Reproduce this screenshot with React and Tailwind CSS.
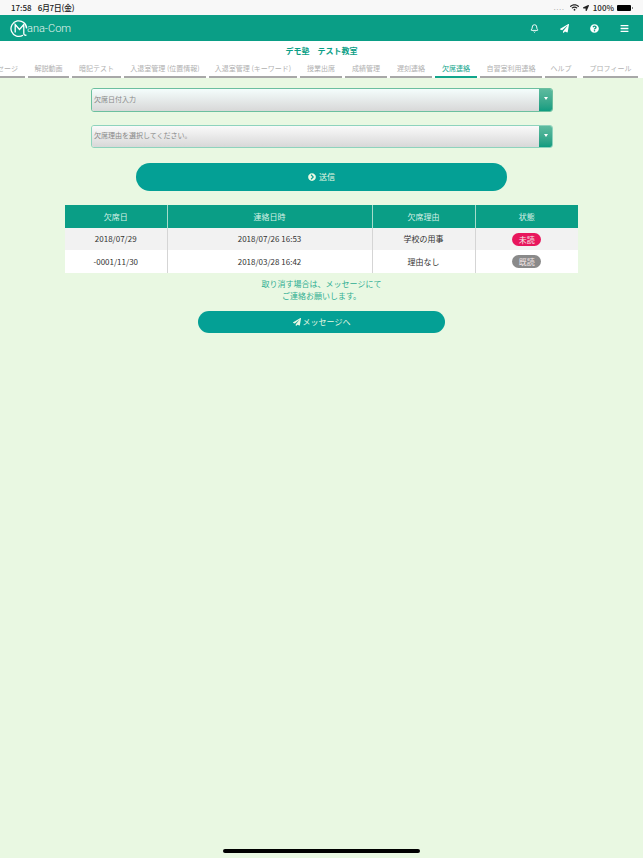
import React from "react";
import { Bell } from "lucide-react";
import { FaPaperPlane, FaQuestionCircle, FaBars, FaChevronCircleRight, FaWifi, FaLocationArrow } from "react-icons/fa";

const tabs = [
  { label: "メッセージ", w: "w-[49px]" },
  { label: "解説動画", w: "w-[41px]" },
  { label: "暗記テスト", w: "w-[49px]" },
  { label: "入退室管理 (位置情報)", w: "w-[82px]" },
  { label: "入退室管理 (キーワード)", w: "w-[88px]" },
  { label: "授業出席", w: "w-[42px]" },
  { label: "成績管理", w: "w-[42px]" },
  { label: "遅刻連絡", w: "w-[42px]" },
  { label: "欠席連絡", w: "w-[42px]", active: true },
  { label: "自習室利用連絡", w: "w-[62px]" },
  { label: "ヘルプ", w: "w-[32px]" },
  { label: "プロフィール", w: "w-[55px] ml-[3px]" },
];

const rows = [
  { date: "2018/07/29", sent: "2018/07/26 16:53", reason: "学校の用事", status: "未読", badge: "bg-[#e8175d]", rowBg: "h-[22px] bg-[#f2f2f2]" },
  { date: "-0001/11/30", sent: "2018/03/28 16:42", reason: "理由なし", status: "既読", badge: "bg-[#8a8a8a]", rowBg: "h-[23px] bg-white" },
];

function Logo() {
  return (
    <svg width="19" height="19" viewBox="0 0 19 19" fill="none" stroke="white" strokeWidth="1.3">
      <path d="M13 16.2A7.8 7.8 0 1 1 16.6 9.5" />
      <path d="M5.2 13.5V5.5L9.5 10.5L13.8 5.5V14.5C13.8 16 15 16.6 16.5 16" />
    </svg>
  );
}

function SelectBox({ label, borderColor, from, height }) {
  return (
    <div className={`flex w-[462px] overflow-hidden rounded-[3px] border ${height} ${borderColor}`}>
      <div className={`flex flex-1 items-center bg-gradient-to-b ${from} to-[#d8d8d8] pb-[2px] pl-[2px] text-[7px] text-[#888]`}>
        {label}
      </div>
      <div className="flex w-[13px] items-start justify-center bg-gradient-to-b from-[#5dbb9f] to-[#0c9c80] pt-[8px]">
        <div className="h-0 w-0 border-x-[2px] border-t-[3px] border-x-transparent border-t-white" />
      </div>
    </div>
  );
}

export default function App() {
  return (
    <div
      className="flex h-[858px] w-[643px] flex-col overflow-hidden bg-[#e9f8e2]"
      style={{ fontFamily: '"Noto Sans CJK JP", "Liberation Sans", sans-serif' }}
    >
      {/* Status bar */}
      <div className="flex h-[15px] items-center justify-between bg-[#f8f8f8] pl-[11px] pr-[10px] text-[8px] font-medium text-[#222]">
        <div className="flex gap-[6px]">
          <span>17:58</span>
          <span className="tracking-[-0.3px]">6月7日(金)</span>
        </div>
        <div className="flex items-center gap-[3px]">
          <span className="mr-[2px] text-[6px] tracking-[1px] text-[#aaa]">....</span>
          <FaWifi size={9} />
          <FaLocationArrow size={6} className="mx-[1px]" />
          <span>100%</span>
          <div className="h-[6px] w-[14px] rounded-[1px] bg-black" />
          <div className="ml-[-2px] h-[2px] w-px bg-[#888]" />
        </div>
      </div>

      {/* Header */}
      <header className="flex h-[26px] items-center justify-between bg-[#0a9e86] pl-[10px] pr-[14px]">
        <div className="flex items-center text-[#e4f5ef]">
          <Logo />
          <span className="ml-[-2px] text-[11px] font-light leading-none" style={{ fontFamily: "Roboto, sans-serif" }}>
            ana-Com
          </span>
        </div>
        <div className="flex items-center gap-[21px] text-white">
          <Bell size={9} strokeWidth={2.5} />
          <FaPaperPlane size={9} />
          <FaQuestionCircle size={9} />
          <FaBars size={9} />
        </div>
      </header>

      {/* Title + tabs */}
      <div className="bg-white">
        <div className="flex h-[19px] items-center justify-center text-[8px] font-bold text-[#0a9e86]">
          デモ塾　テスト教室
        </div>
        <nav className="ml-[-24px] flex h-[18px] gap-[3px]">
          {tabs.map((tab) => (
            <div
              key={tab.label}
              className={`flex shrink-0 items-start justify-center whitespace-nowrap border-b-2 text-[7px] leading-[16px] ${tab.w} ${
                tab.active ? "border-[#12a58c] text-[#12a58c]" : "border-[#a8a8a8] text-[#b0b0b0]"
              }`}
            >
              {tab.label}
            </div>
          ))}
        </nav>
      </div>

      {/* Form */}
      <main className="flex flex-col items-center">
        <div className="mt-[10px] ml-[1px]">
          <SelectBox label="欠席日付入力" borderColor="border-[#6cbf9f]" from="from-[#f4fdfc]" height="h-6" />
        </div>
        <div className="mt-[13px] ml-[1px]">
          <SelectBox label="欠席理由を選択してください。" borderColor="border-[#8ed3bd]" from="from-[#fafafa]" height="h-[23px]" />
        </div>

        <button className="mt-[15px] flex h-7 w-[371px] items-center justify-center gap-[3px] rounded-full bg-[#04a095] text-[8px] text-[#e9f8e2]">
          <FaChevronCircleRight size={8} />
          送信
        </button>

        {/* Absence table */}
        <table className="mt-[14px] w-[513px] table-fixed border-collapse text-[8px]">
          <thead>
            <tr className="h-[23px] bg-[#0a9e86] text-[#d6f2e6]">
              <th className="w-[102px] border-r border-[#a5dccb] font-normal">欠席日</th>
              <th className="w-[205px] border-r border-[#a5dccb] font-normal">連絡日時</th>
              <th className="w-[103px] border-r border-[#a5dccb] font-normal">欠席理由</th>
              <th className="font-normal">状態</th>
            </tr>
          </thead>
          <tbody className="text-[#333]">
            {rows.map((row) => (
              <tr key={row.date} className={`text-center ${row.rowBg}`}>
                <td className="border-r border-[#d5d5d5]">{row.date}</td>
                <td className="border-r border-[#d5d5d5]">{row.sent}</td>
                <td className="border-r border-[#d5d5d5]">{row.reason}</td>
                <td>
                  <span className={`mx-auto block h-[13px] w-[29px] rounded-full text-[8px] leading-[13px] text-[#f5e8e8] ${row.badge}`}>
                    {row.status}
                  </span>
                </td>
              </tr>
            ))}
          </tbody>
        </table>

        <p className="mt-[5px] text-center text-[8px] leading-[12px] text-[#2fae92]">
          取り消す場合は、メッセージにて
          <br />
          ご連絡お願いします。
        </p>

        <button className="mt-[9px] flex h-[22px] w-[247px] items-center justify-center gap-[2px] rounded-full bg-[#04a095] text-[8px] text-[#e9f8e2]">
          <FaPaperPlane size={8} />
          メッセージへ
        </button>
      </main>

      {/* Home indicator */}
      <div className="mt-auto mb-[5px] flex justify-center">
        <div className="h-1 w-[197px] rounded-full bg-black" />
      </div>
    </div>
  );
}
